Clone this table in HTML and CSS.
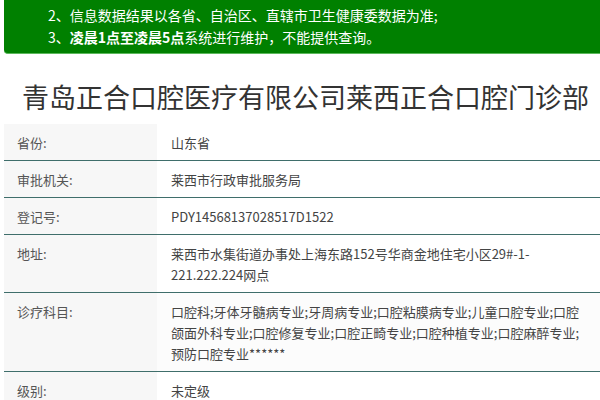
FILE: index.html
```html
<!DOCTYPE html>
<html lang="zh-CN">
<head>
<meta charset="utf-8">
<link rel="stylesheet" href="styles.css">
</head>
<body>
<div class="page">
  <div class="notice">
    <p>2、信息数据结果以各省、自治区、直辖市卫生健康委数据为准;</p>
    <p>3、<b>凌晨1点至凌晨5点</b>系统进行维护，不能提供查询。</p>
  </div>
  <h1 class="title">青岛正合口腔医疗有限公司莱西正合口腔门诊部</h1>
  <table class="info">
    <tr><td class="label">省份:</td><td class="value">山东省</td></tr>
    <tr><td class="label">审批机关:</td><td class="value">莱西市行政审批服务局</td></tr>
    <tr><td class="label">登记号:</td><td class="value">PDY14568137028517D1522</td></tr>
    <tr><td class="label">地址:</td><td class="value">莱西市水集街道办事处上海东路152号华商金地住宅小区29#-1-<wbr>221.222.224网点</td></tr>
    <tr class="alt"><td class="label">诊疗科目:</td><td class="value">口腔科;牙体牙髓病专业;牙周病专业;口腔粘膜病专业;儿童口腔专业;口腔颌面外科专业;口腔修复专业;口腔正畸专业;口腔种植专业;口腔麻醉专业;预防口腔专业******</td></tr>
    <tr><td class="label">级别:</td><td class="value">未定级</td></tr>
  </table>
</div>
</body>
</html>
```

FILE: styles.css
```css
html, body {
  margin: 0;
  padding: 0;
  background: #fff;
  overflow: hidden;
}
body {
  font-family: "Noto Sans CJK SC", "Noto Sans", sans-serif;
}
.page {
  padding-left: 4px;
}
.notice {
  background: #008000;
  color: #fff;
  font-size: 14px;
  line-height: 22px;
  padding: 4px 0 5px 44px;
  border-bottom: 1px solid #5cb85c;
  border-bottom-left-radius: 4px;
}
.notice p {
  margin: 0;
}
.notice b {
  font-weight: 700;
}
.title {
  margin: 0;
  height: 70px;
  box-sizing: border-box;
  padding: 25px 0 0 18px;
  font-size: 27px;
  line-height: 36px;
  font-weight: 400;
  color: #333;
  white-space: nowrap;
}
.info {
  border-collapse: collapse;
  width: 596px;
  font-size: 13px;
  line-height: 21px;
}
.info td {
  padding: 8px 0 7px;
  vertical-align: top;
  border-bottom: 1px solid #3f6e6b;
}
.info .label {
  width: 140px;
  padding-left: 13px;
  background: #f7f7f7;
  color: #555;
}
.info .value {
  padding-left: 14px;
  padding-right: 18px;
  color: #444;
}
.info .alt .value {
  background: #fcfcfc;
}
```
